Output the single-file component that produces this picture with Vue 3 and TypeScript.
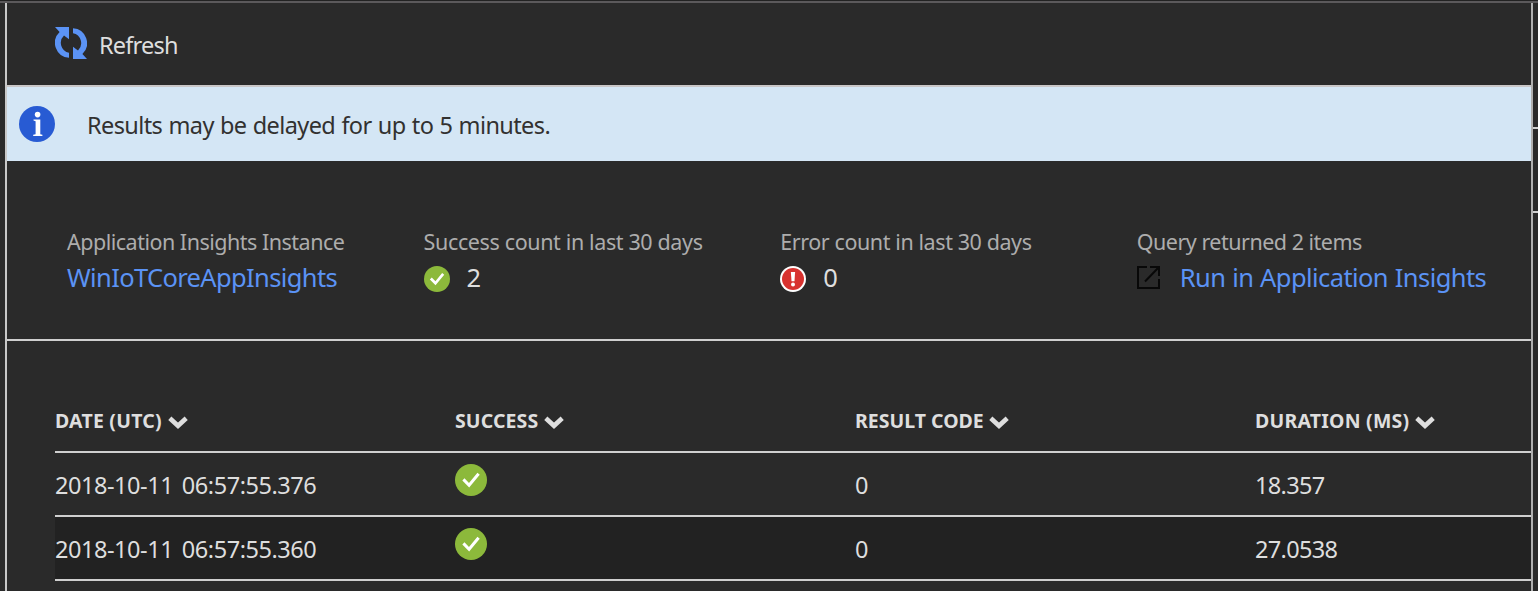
<script setup lang="ts">
interface Row { date: string; code: string; duration: string }

const columns = [
  { label: 'DATE (UTC)', cls: 'h-date' },
  { label: 'SUCCESS', cls: 'h-success' },
  { label: 'RESULT CODE', cls: 'h-code' },
  { label: 'DURATION (MS)', cls: 'h-duration' },
]
const rows: Row[] = [
  { date: '2018-10-11 06:57:55.376', code: '0', duration: '18.357' },
  { date: '2018-10-11 06:57:55.360', code: '0', duration: '27.0538' },
]
</script>

<template>
  <div class="page">
    <div class="topbar"></div>
    <div class="body">
      <main class="blade">
        <div class="toolbar">
          <svg class="refresh-icon" width="32" height="32" viewBox="0 0 32 32" fill="#5b93f5">
            <path d="M0 0H14V12.2L9 8.6A10 10 0 0 0 14 25.7V30.8A15 15 0 0 1 4.6 5Z" />
            <path d="M18 1.2A15 15 0 0 1 27.4 27L32 32H18V19.8L23 23.4A10 10 0 0 0 18 6.3Z" />
          </svg>
          <span class="refresh">Refresh</span>
        </div>
        <div class="banner">
          <svg class="info-icon" width="36" height="36" viewBox="0 0 36 36">
            <circle cx="18" cy="18" r="18" fill="#285bd3" />
            <circle cx="18.6" cy="8.6" r="2.8" fill="#fff" />
            <path d="M14.5 13.4H21.3V28.2L23.4 28.8V30H14.2V28.8L16.6 28.2V15.2L14.5 14.6Z" fill="#fff" />
          </svg>
          <span class="notice">Results may be delayed for up to 5 minutes.</span>
        </div>
        <section class="summary">
          <div class="stat">
            <div class="label l1">Application Insights Instance</div>
            <div class="value"><a class="link k1">WinIoTCoreAppInsights</a></div>
          </div>
          <div class="stat">
            <div class="label l2">Success count in last 30 days</div>
            <div class="value">
              <svg class="status" width="26" height="26" viewBox="0 0 32 32">
                <circle cx="16" cy="16" r="16" fill="#8cb93b" />
                <path d="M8.4 15.4L14.1 21.3L23.6 9.8" fill="none" stroke="#fff" stroke-width="3.3" />
              </svg>
              <span class="count">2</span>
            </div>
          </div>
          <div class="stat">
            <div class="label l3">Error count in last 30 days</div>
            <div class="value">
              <svg class="status" width="26" height="26" viewBox="0 0 26 26">
                <circle cx="13" cy="13" r="13" fill="#fff" />
                <circle cx="13" cy="13" r="11" fill="#d8322f" />
                <path d="M10.9 6H15.1L14.5 15.2H11.5Z" fill="#fff" />
                <circle cx="13" cy="18.6" r="2" fill="#fff" />
              </svg>
              <span class="count">0</span>
            </div>
          </div>
          <div class="stat">
            <div class="label l4">Query returned 2 items</div>
            <div class="value">
              <svg class="open-icon" width="24" height="24" viewBox="0 0 24 24" fill="none" stroke="#080808" stroke-width="2">
                <path d="M10 1H1V22H22V13M13 1H22V10M22 1L8 15.5" />
              </svg>
              <a class="link k2">Run in Application Insights</a>
            </div>
          </div>
        </section>
        <section class="grid">
          <div class="line head">
            <div v-for="c in columns" :key="c.label" class="cell">
              <span :class="c.cls">{{ c.label }}</span>
              <svg class="chevron" width="20" height="13" viewBox="0 0 20 13">
                <path d="M1.8 2.2L10 9.8L18.2 2.2" fill="none" stroke="#dedede" stroke-width="4.6" />
              </svg>
            </div>
          </div>
          <div v-for="r in rows" :key="r.date" class="line row">
            <div class="cell date">{{ r.date }}</div>
            <div class="cell">
              <svg class="ok" width="32" height="32" viewBox="0 0 32 32">
                <circle cx="16" cy="16" r="16" fill="#8cb93b" />
                <path d="M8.4 15.4L14.1 21.3L23.6 9.8" fill="none" stroke="#fff" stroke-width="3" />
              </svg>
            </div>
            <div class="cell num">{{ r.code }}</div>
            <div class="cell num">{{ r.duration }}</div>
          </div>
        </section>
      </main>
      <aside class="edge"><i></i><i></i></aside>
    </div>
  </div>
</template>

<style>
body { background: #2a2a2a; overflow: hidden; }
</style>

<style scoped>
.page { width: 1538px; height: 591px; display: flex; flex-direction: column; overflow: hidden; background: #2a2a2a; color: #dedede; font-family: "Noto Sans", sans-serif; white-space: nowrap; }
.topbar { flex: none; height: 1px; background: #222; border-bottom: 2px solid #5b595b; }
.body { flex: 1; display: flex; padding-left: 5px; }
.blade { box-sizing: border-box; width: 1528px; border-left: 2px solid #c8c8c8; border-right: 2px solid #b0b0b0; }
.toolbar { box-sizing: border-box; height: 84px; border-bottom: 2px solid #c9c6c7; padding: 24px 0 0 48px; display: flex; gap: 12px; }
.refresh { font-size: 23.5px; line-height: 32px; margin-top: 2px; letter-spacing: -.8px; }
.banner { box-sizing: border-box; height: 74px; background: #d4e6f5; padding: 19px 0 0 12px; display: flex; color: #323130; }
.notice { font-size: 23.5px; line-height: 32px; margin: 3px 0 0 32px; letter-spacing: -.6px; word-spacing: .7px; }
.summary { box-sizing: border-box; height: 180px; border-bottom: 2px solid #cfcfcf; padding: 66px 0 0 60px; display: grid; grid-template-columns: repeat(3, 356.6px) 1fr; }
.label { font-size: 21.5px; line-height: 30px; color: #adadad; }
.l1, .l4 { letter-spacing: -.5px; }
.l2 { letter-spacing: -.37px; }
.l3 { letter-spacing: -.41px; }
.value { display: flex; align-items: center; height: 40px; font-size: 25.5px; }
.status { margin-top: 4px; }
.count { margin-left: 17px; }
.link { color: #5b93f5; }
.k1 { letter-spacing: -.64px; }
.open-icon { margin-top: 2px; }
.k2 { margin-left: 19px; letter-spacing: -.58px; word-spacing: .7px; }
.grid { margin-left: 48px; padding-top: 48px; }
.line { box-sizing: border-box; display: grid; grid-template-columns: repeat(3, 400px) 1fr; border-bottom: 2px solid #cfcfcf; height: 64px; }
.head { font-size: 19.5px; font-weight: 700; line-height: 62px; }
.head .cell { display: flex; padding-top: 1px; }
.h-date, .h-duration { letter-spacing: .22px; }
.h-success { letter-spacing: .1px; }
.chevron { margin: 26px 0 0 6px; }
.h-code + .chevron { margin-left: 5px; }
.row { font-size: 23.5px; line-height: 64px; }
.row:nth-child(odd) { background: #222; }
.date { letter-spacing: -.45px; word-spacing: 3px; }
.num { letter-spacing: -.65px; }
.ok { display: block; margin-top: 11px; }
.edge { width: 5px; padding-top: 124px; }
.edge i { display: block; height: 2px; background: #d0d0d0; margin-bottom: 82px; }
</style>
